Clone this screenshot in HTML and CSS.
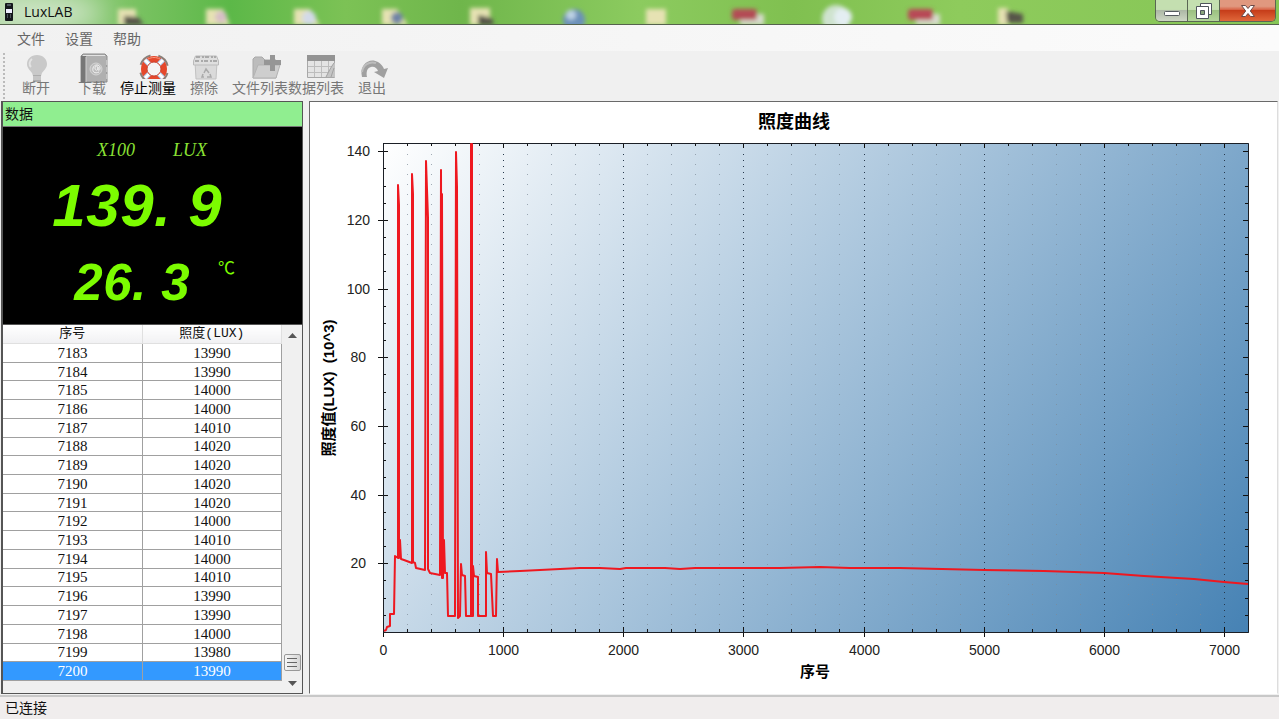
FILE: index.html
```html
<!DOCTYPE html>
<html lang="zh-CN">
<head>
<meta charset="utf-8">
<title>LuxLAB</title>
<link rel="stylesheet" href="styles.css">
</head>
<body>
<div class="app">
  <header class="titlebar">
    <svg class="desktop" viewBox="0 0 1279 24" preserveAspectRatio="xMinYMin slice" aria-hidden="true">
      <defs>
        <filter id="soft" x="-30%" y="-30%" width="160%" height="160%"><feGaussianBlur stdDeviation="2"/></filter>
        <filter id="haze" x="-30%" y="-100%" width="160%" height="300%"><feGaussianBlur stdDeviation="14"/></filter>
        <linearGradient id="grass"><stop offset="0" stop-color="#a9d39b"/><stop offset=".1" stop-color="#7cc364"/><stop offset=".18" stop-color="#5cb848"/><stop offset=".27" stop-color="#7cc255"/><stop offset=".36" stop-color="#6fb64b"/><stop offset=".5" stop-color="#8ccb5f"/><stop offset=".62" stop-color="#80c050"/><stop offset=".75" stop-color="#8ecb5c"/><stop offset="1" stop-color="#86c656"/></linearGradient>
      </defs>
      <rect width="1279" height="24" fill="url(#grass)"/>
      <ellipse cx="45" cy="13" rx="60" ry="14" fill="#dcebd7" filter="url(#haze)"/>
      <g filter="url(#soft)">
        <path d="M118 9h18v16h-18zM206 9h17l7 16h-24zM294 9h16l10 16h-26zM382 9h15l11 16h-26zM470 8h20v17h-20zM646 9h20v16h-20zM998 8h10v17h-10z" fill="#e6e2b3"/>
        <path d="M124 16l14 1 6 8h-20zM478 15l14 3 2 7h-16zM1006 11l17 3v9h-16z" fill="#57544a"/>
        <circle cx="221" cy="17" r="6" fill="#d7bfc6"/><circle cx="309" cy="18" r="7" fill="#d3dae8"/>
        <circle cx="397" cy="18" r="6" fill="#7083a6"/><circle cx="574" cy="20" r="11" fill="#6c91b9"/><circle cx="571" cy="15" r="5" fill="#bdd2e4"/>
        <path d="M740 14h24v11h-24zM916 14h24v11h-24z" fill="#d7dccd"/>
        <rect x="732" y="9" width="25" height="11" rx="3" fill="#b34b55"/><rect x="908" y="9" width="25" height="11" rx="3" fill="#b84a57"/>
        <circle cx="836" cy="19" r="14" fill="#cfe3cf"/><circle cx="843" cy="17" r="9" fill="#e4eef2"/>
      </g>
    </svg>
    <svg class="app-icon" viewBox="0 0 10 18" aria-hidden="true"><rect x="1" width="8" height="18" rx="1" fill="#14181d"/><path d="M2 6h6v4H2z" fill="#eef"/><path d="M3 2h4M3 12h1m2 0h1M3 14h1m2 0h1" stroke="#8893a0"/></svg>
    <h1 class="title">LuxLAB</h1>
    <div class="window-buttons">
      <button class="win" aria-label="最小化"><svg width="18" height="16" viewBox="0 0 18 16"><rect x="1.500" y="8.500" width="15" height="4" rx="1" fill="#fff" stroke="#555a60"/></svg></button>
      <button class="win" aria-label="还原"><svg width="18" height="18" viewBox="0 0 18 18"><g fill="#fff" stroke="#4f555c"><path d="M5.500 1.500h11v11h-11z"/><path d="M1.500 4.500h12v12h-12z"/><path d="M5.500 8.500h4v4h-4z" fill="#89a57b"/></g></svg></button>
      <button class="win win-close" aria-label="关闭"><svg width="16" height="14" viewBox="0 0 16 14"><path d="M1.500 1.500h4L8 4.500l2.500-3h4L10.300 7l4.200 5.500h-4L8 9.500l-2.500 3h-4L5.700 7z" fill="#fff" stroke="#6b4a48"/></svg></button>
    </div>
  </header>

  <nav class="menubar">
    <button>文件</button><button>设置</button><button>帮助</button>
  </nav>

  <div class="toolbar">
    <button class="tool">
      <svg viewBox="0 0 56 30"><path d="M29 2c-6 0-10 4-10 9 0 4 3 6 5 9l1 3h8l1-3c2-3 5-5 5-9 0-5-4-9-10-9z" fill="#c9c9c9"/><path d="M24 6c-3 2-3 6-1 8" fill="none" stroke="#e3e3e3" stroke-width="2"/><path d="M25 22h8v7h-8z" fill="#adadad"/><path d="M25 24h8m-8 2h8" stroke="#ddd"/></svg>
      <span>断开</span></button>
    <button class="tool">
      <svg viewBox="0 0 56 30"><path d="M17 3l2-2h22l2 2v26H17z" fill="#b0b0b0" stroke="#8c8c8c"/><path d="M17 3h5v26h-5z" fill="#777"/><path d="M22 4v25" stroke="#d0d0d0"/><path d="M19 2.500h22" stroke="#e2e2e2"/><circle cx="32" cy="16" r="6" fill="#bdbdbd" stroke="#d4d4d4"/><path d="M35 19c-4 2-7 0-6-4 1-4 7-4 7 0 0 3-2 3-2 1v-2m0 1c0 3-3 3-3 0s3-2 3 0" fill="none" stroke="#f2f2f2"/><path d="M43 7v5m0 2v5m0 2v5" stroke="#c4c4c4" stroke-width="2"/></svg>
      <span>下载</span></button>
    <button class="tool tool-active">
      <svg viewBox="0 0 56 30"><defs><clipPath id="buoy"><path d="M18 0h34v26H18z"/></clipPath></defs><g clip-path="url(#buoy)"><circle cx="34" cy="16" r="14" fill="none" stroke="#8b7f78" stroke-width="2" stroke-dasharray="14 8" stroke-dashoffset="-4"/><circle cx="34" cy="16" r="10" fill="none" stroke="#e5482c" stroke-width="6"/><g stroke="#a9c9ea" stroke-width="5"><path d="M25 7l5 5M38 12l5-5M25 25l5-5M38 20l5 5"/></g><g stroke="#fff" stroke-width="3"><path d="M25 7l5 5M38 12l5-5M25 25l5-5M38 20l5 5"/></g><path d="M28 6c4-2 8-2 12 0" fill="none" stroke="#f79a80"/><circle cx="34" cy="16" r="7" fill="#f4f4f4" stroke="#c8402d"/></g></svg>
      <span>停止测量</span></button>
    <button class="tool">
      <svg viewBox="0 0 56 30"><path d="M19 9h22l-1 17H20z" fill="#dadada" stroke="#c2c2c2"/><path d="M17.500 8l2-5h21l2 5v4h-25z" fill="#dfdfdf" stroke="#bbb"/><path d="M20 4h20M19 8h22" stroke="#aaa" stroke-width="2" stroke-dasharray="4 2 2 1"/><path d="M28 20l2-4 3 4m1 1l1 3h-4m-3 0h-2l1-3" fill="none" stroke="#aaa" stroke-width="1.500"/></svg>
      <span>擦除</span></button>
    <button class="tool">
      <svg viewBox="0 0 56 30"><path d="M21 25V6l2-2h7l3 3h11v18z" fill="#bcbcbc" stroke="#a9a9a9"/><path d="M21 25l5-13h22l-4 13z" fill="#cecece" stroke="#b3b3b3"/><path d="M38 2h5v5h6v5h-6v6h-5v-6h-6V7h6z" fill="#969696"/></svg>
      <span>文件列表</span></button>
    <button class="tool">
      <svg viewBox="0 0 56 30"><path d="M19.500 2.500h27v22h-27z" fill="#e4e4e4" stroke="#a8a8a8"/><path d="M19 2h28v6H19z" fill="#939393"/><path d="M20 13.500h26M20 19.500h26M26.500 8v16M33.500 8v16M40.500 8v16" stroke="#bdbdbd"/><path d="M46 10c-3 4-5 8-8 14h9V10z" fill="#c5c5c5"/><path d="M46 10c-3 4-5 8-8 14M46 15l-3 9" fill="none" stroke="#a2a2a2"/></svg>
      <span>数据列表</span></button>
    <button class="tool">
      <svg viewBox="0 0 56 30"><path d="M18 24c-3-13 8-20 16-15 3 2 5 4 6 7l4-1-4 10-10-6 4-1c-1-3-4-5-7-4-4 1-5 5-4 10z" fill="#a0a0a0"/><path d="M18 19c1-7 7-11 14-9" stroke="#bdbdbd" fill="none" stroke-width="2"/></svg>
      <span>退出</span></button>
  </div>

  <main class="workspace">
    <aside class="side">
      <h2 class="side-title">数据</h2>
      <section class="meter" aria-label="读数">
        <div class="units"><i>X100</i><i>LUX</i></div>
        <div class="reading reading-lux"><b>1</b><b>3</b><b>9</b><b class="dot">.</b><b>9</b></div>
        <div class="reading reading-temp"><b>2</b><b>6</b><b class="dot">.</b><b>3</b><span class="degree">℃</span></div>
      </section>
      <section class="log">
        <table class="rows">
          <thead><tr><th>序号</th><th>照度(LUX)</th></tr></thead>
          <tbody>
            <tr><td>7183</td><td>13990</td></tr>
            <tr><td>7184</td><td>13990</td></tr>
            <tr><td>7185</td><td>14000</td></tr>
            <tr><td>7186</td><td>14000</td></tr>
            <tr><td>7187</td><td>14010</td></tr>
            <tr><td>7188</td><td>14020</td></tr>
            <tr><td>7189</td><td>14020</td></tr>
            <tr><td>7190</td><td>14020</td></tr>
            <tr><td>7191</td><td>14020</td></tr>
            <tr><td>7192</td><td>14000</td></tr>
            <tr><td>7193</td><td>14010</td></tr>
            <tr><td>7194</td><td>14000</td></tr>
            <tr><td>7195</td><td>14010</td></tr>
            <tr><td>7196</td><td>13990</td></tr>
            <tr><td>7197</td><td>13990</td></tr>
            <tr><td>7198</td><td>14000</td></tr>
            <tr><td>7199</td><td>13980</td></tr>
            <tr class="selected"><td>7200</td><td>13990</td></tr>
          </tbody>
        </table>
        <div class="scrollbar">
          <button aria-label="向上"><svg width="9" height="5" viewBox="0 0 9 5"><path d="M0 5l4.500-5L9 5z" fill="#555"/></svg></button>
          <div class="track"><div class="thumb"><svg width="10" height="11" viewBox="0 0 10 11"><path d="M0 1.500h10M0 5.500h10M0 9.500h10" stroke="#666"/></svg></div></div>
          <button aria-label="向下"><svg width="9" height="5" viewBox="0 0 9 5"><path d="M0 0l4.500 5L9 0z" fill="#555"/></svg></button>
        </div>
      </section>
    </aside>

    <section class="chart-panel">
      <svg class="chart" id="chart" viewBox="310 102 967 591" role="img" aria-label="照度曲线">
        <defs>
          <linearGradient id="sky" gradientUnits="userSpaceOnUse" x1="383" y1="143" x2="1170" y2="736"><stop offset="0" stop-color="#fff"/><stop offset="1" stop-color="#4682b4"/></linearGradient>
        </defs>
        <rect x="383" y="143" width="866" height="490" fill="url(#sky)"/>
        <g id="grid"></g>
        <path d="M383.500 143.500H1248.500V632.500H383.500z" fill="none" stroke="#1b1f26"/>
        <path class="curve" d="M384 631L386 630L387 627L390 626L390 614L394 614L395 556L398 558L398 185L399 205V558L400 540L401 559L404 560L412 563L412 174L413 194V562L415 563L416 568L425 570L426 161L428 218L428 569L430 573L440 575L441 170L442 578L442 194L443 578L444 540L445 573L447 573L448 616H455L456 152L457 187L458 618L460 616L461 564L462 575L465 576L466 616H471L471 144L472 144V616L473 616L473 566L474 576L478 577L478 616H486L486 552L487 573L491 574L493 616H496L497 559L498 572L520 571L540 570L560 569L580 568H600L620 569L626 568H665L680 569L695 568L780 568L820 567L850 568H900L984 570L1044 571L1104 573L1144 576L1194 579L1224 582L1248 584"/>
        <g id="labels"></g>
        <text class="chart-title" x="794" y="128">照度曲线</text>
        <text class="axis-title" x="815" y="677">序号</text>
        <text class="axis-title" transform="translate(334 388) rotate(-90)" x="0" y="0">照度值(LUX)&#160; (10^3)</text>
      </svg>
    </section>
  </main>

  <footer class="status">已连接</footer>
</div>
<script src="chart.js"></script>
</body>
</html>
```

FILE: chart.js
```js
const NS = 'http://www.w3.org/2000/svg';
const plot = { left: 383, right: 1248, top: 143, bottom: 632 };
const grid = document.getElementById('grid');
const labels = document.getElementById('labels');
const xAt = v => plot.left + Math.round(v * 0.12013) + 0.5;
const yAt = v => plot.bottom - Math.round(v * 3.434) + 0.5;

function line(d, cls) {
  const p = document.createElementNS(NS, 'path');
  p.setAttribute('d', d);
  p.setAttribute('class', cls);
  grid.append(p);
}

function label(text, x, y, cls) {
  const t = document.createElementNS(NS, 'text');
  t.setAttribute('x', x);
  t.setAttribute('y', y);
  t.setAttribute('class', cls);
  t.textContent = text;
  labels.append(t);
}

for (let v = 0; v <= 7000; v += 200) {
  const x = xAt(v);
  const major = v % 1000 === 0;
  if (v > 0) line(`M${x} ${plot.top + 11}V${plot.bottom}`, major ? 'grid-major' : 'grid-minor');
  const size = major ? 5 : 3;
  line(`M${x} ${plot.top}v${size}M${x} ${plot.bottom + (major ? 5 : 0)}V${plot.bottom - size}`, 'tick');
  if (major) label(v, x, 655, 'tick-label x-label');
}

for (let v = 5; v <= 140; v += 5) {
  const y = yAt(v);
  const major = v % 20 === 0;
  const size = major ? 5 : 3;
  line(`M${plot.left - (major ? 5 : 0)} ${y}H${plot.left + size}M${plot.right} ${y}h${-size}`, 'tick');
  if (major) label(v, v < 100 ? 366 : 370, y + 4, 'tick-label y-label');
}
```

FILE: styles.css
```css
* { box-sizing: border-box; }
body {
  margin: 0;
  background: #f0f0f0;
  color: #111;
  font: 14px/20px "Noto Sans CJK SC", sans-serif;
}
button { font: inherit; color: inherit; border: 0; padding: 0; background: none; }
h1, h2 { margin: 0; font-weight: 400; }
svg { display: block; }

.app { min-height: 100vh; display: flex; flex-direction: column; }

.titlebar {
  position: relative;
  height: 25px;
  flex: none;
  display: flex;
  align-items: center;
  gap: 10px;
  padding-left: 4px;
  border-bottom: 1px solid #55624d;
  overflow: hidden;
}
.desktop { position: absolute; inset: 0; width: 100%; height: 100%; }
.app-icon { position: relative; width: 10px; height: 18px; }
.title { position: relative; font: 14px/24px "Open Sans", "Noto Sans", sans-serif; }
.window-buttons {
  position: relative;
  align-self: flex-start;
  display: flex;
  height: 22px;
  margin: 0 3px 0 auto;
  border: 1px solid #5a6653;
  border-top: 0;
  border-radius: 0 0 5px 5px;
  overflow: hidden;
}
.win {
  width: 32px;
  display: flex;
  align-items: center;
  justify-content: center;
  border-right: 1px solid #5a6653;
  background: linear-gradient(#c4dfb0 0 45%, #9cc081 50%, #b4d59b);
}
.win:first-child { background: linear-gradient(#c4dfb0 0 45%, #adb8a6 50%, #cdd6c4); }
.win-close { width: 55px; border-right: 0; background: linear-gradient(#e0987f 0 30%, #d8674a 45%, #c63d1a 50%, #e0673a); }

.menubar {
  height: 26px;
  flex: none;
  display: flex;
  gap: 20px;
  padding: 3px 17px 0;
  align-items: flex-start;
  color: #666;
  background: linear-gradient(90deg, #f1f1f1, #fbfbfb);
}

.toolbar {
  flex: none;
  height: 50px;
  display: flex;
  padding: 2px 0 0 8px;
  color: #777;
  background: linear-gradient(#f0f0f0 50%, #bbb 50%) 3px 4px / 2px 4px repeat-y, #f0f0f0;
}
.tool { width: 56px; height: 46px; display: flex; flex-direction: column; align-items: center; white-space: nowrap; line-height: 18px; }
.tool svg { width: 56px; height: 30px; flex: none; }
.tool span { margin-top: -5px; position: relative; font-size: 14px; }
.tool-active { color: #000; }

.workspace { flex: 1; display: flex; gap: 6px; padding: 0 1px; }
.side { width: 302px; flex: none; display: flex; flex-direction: column; border: 1px solid #555; border-width: 1px 1px 1px 2px; }
.side-title { height: 24px; padding: 1px 2px; font-size: 14px; line-height: 20px; background: #90ee90; }

.meter { height: 198px; background: #000; color: #7cfc00; border-top: 1px solid #777; overflow: hidden; }
.units { display: flex; gap: 38px; padding: 12px 0 0 94px; font: italic 18px/22px "Liberation Serif", serif; color: #8ae234; }
.reading { display: flex; font: italic 700 60px/70px "Liberation Sans", sans-serif; }
.reading b { width: 34px; text-align: center; font-weight: 700; }
.reading .dot { text-align: left; }
.reading-lux { padding: 10px 0 0 49px; }
.reading-temp { padding: 12px 0 0 71px; font-size: 51px; line-height: 60px; }
.reading-temp b { width: 29px; }
.degree { margin-left: 28px; font: 17px/28px "Noto Sans CJK SC", sans-serif; }

.log { flex: 1; display: flex; border-top: 1px solid #555; background: #f0f0f0; padding-bottom: 12px; }
.rows { flex: 1; width: 100%; border-collapse: collapse; background: #fff; table-layout: fixed; }
.rows th, .rows td { padding: 0; text-align: center; border: 1px solid #a0a0a0; border-left: 0; }
.rows td { font: 15px/16px "Liberation Serif", serif; }
.rows th { height: 18px; font: 400 13px/18px "Liberation Mono", "Noto Sans CJK SC", monospace; border-color: #e0e0e0; border-top: 0; background: linear-gradient(#fff, #f1f1f3); }
.rows .selected td { background: #3399ff; color: #fff; }
.scrollbar { flex: none; width: 20px; margin-bottom: -12px; display: flex; flex-direction: column; align-items: center; background: #f0f0f0; }
.scrollbar button { width: 18px; height: 20px; display: flex; align-items: center; justify-content: center; }
.track { flex: 1; display: flex; align-items: flex-end; }
.thumb { width: 17px; height: 17px; margin-bottom: 2px; display: flex; align-items: center; justify-content: center; border: 1px solid #999; border-radius: 2px; background: linear-gradient(90deg, #f6f6f6, #d6d6d6); }

.chart-panel { flex: 1; min-width: 0; display: flex; background: #fff; border: 1px solid #696969; border-right-color: #ddd; border-bottom-color: #fff; }
.chart { width: 100%; flex: 1; }
.grid-major { stroke: #26384c; stroke-dasharray: 1 5; stroke-width: 1px; }
.grid-minor { stroke: #7d8b98; stroke-dasharray: 1 9; stroke-width: 1px; opacity: 0.7; }
.tick { stroke: #111; fill: none; }
.curve { fill: none; stroke: #ee1820; stroke-width: 2px; stroke-linejoin: round; }
.tick-label { font: 14px "Liberation Sans", Arial, sans-serif; fill: #222; }
.x-label { text-anchor: middle; }
.y-label { text-anchor: end; }
.chart-title { font: 700 18px "Noto Sans CJK SC", sans-serif; text-anchor: middle; }
.axis-title { font: 700 15px "Liberation Sans", "Noto Sans CJK SC", sans-serif; text-anchor: middle; }

.status { flex: none; height: 25px; margin-top: 1px; padding: 0 5px; line-height: 20px; border-top: 2px solid #c8c8c8; border-bottom: 1px solid #888; background: #f0eded; }
```
